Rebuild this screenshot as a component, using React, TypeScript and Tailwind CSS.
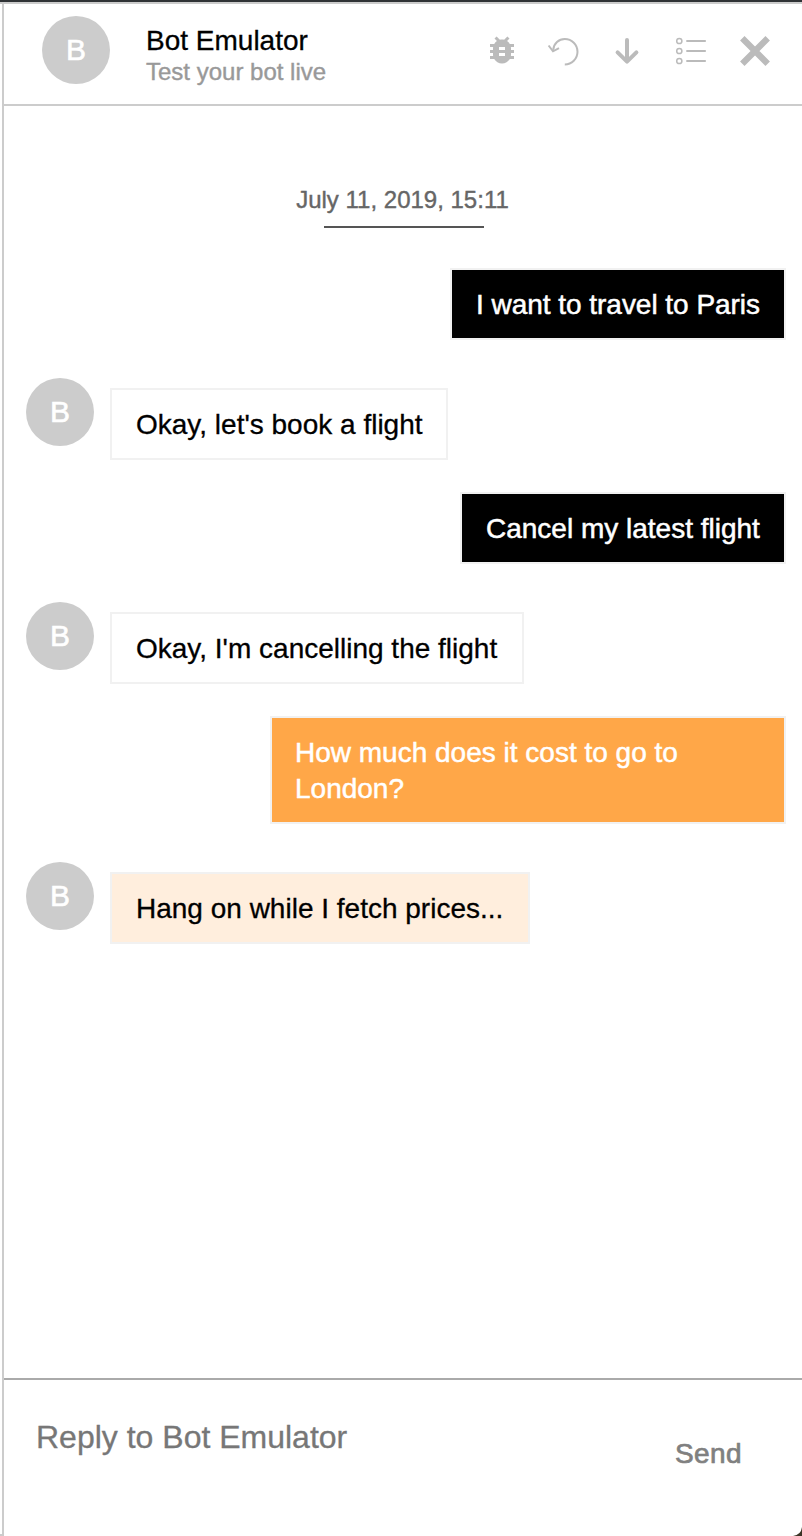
import React from "react";

type Message = { from: "user" | "bot"; text: string; box: string };

const messages: Message[] = [
  { from: "user", text: "I want to travel to Paris", box: "mt-10 w-[336px] pl-6 tracking-[-0.03px] bg-black text-white [-webkit-text-stroke:0.5px]" },
  { from: "bot", text: "Okay, let's book a flight", box: "w-[338px] pl-6 bg-white text-black [-webkit-text-stroke:0.3px]" },
  { from: "user", text: "Cancel my latest flight", box: "mt-8 w-[326px] pl-6 bg-black text-white [-webkit-text-stroke:0.5px]" },
  { from: "bot", text: "Okay, I'm cancelling the flight", box: "w-[414px] pl-6 bg-white text-black [-webkit-text-stroke:0.3px]" },
  { from: "user", text: "How much does it cost to go to London?", box: "mt-8 w-[516px] pl-[23px] bg-[#ffa748] text-white [-webkit-text-stroke:0.5px]" },
  { from: "bot", text: "Hang on while I fetch prices...", box: "w-[420px] pl-6 bg-[#ffeedd] text-black [-webkit-text-stroke:0.3px]" },
];

function Avatar() {
  return (
    <div className="flex size-[68px] shrink-0 items-center justify-center rounded-full bg-[#ccc] text-[30px] leading-9 text-white [-webkit-text-stroke:0.6px]">
      B
    </div>
  );
}

function Bubble({ message }: { message: Message }) {
  const wrap = message.text.length > 32 ? "pr-16" : "whitespace-nowrap";
  return (
    <div className={`border-2 border-[#f1f1f1] pb-[15px] pt-[17px] text-[28px] leading-9 ${message.box} ${wrap}`}>
      {message.text}
    </div>
  );
}

function Toolbar() {
  return (
    <div className="flex h-9 items-center text-[#bbb]">
      <svg className="size-9" viewBox="0 0 24 24" fill="currentColor">
        <path d="M20 8h-2.81c-.45-.78-1.07-1.45-1.82-1.96L17 4.41 15.59 3l-2.17 2.17C12.96 5.06 12.49 5 12 5c-.49 0-.96.06-1.41.17L8.41 3 7 4.41l1.62 1.63C7.88 6.55 7.26 7.22 6.81 8H4v2h2.09c-.05.33-.09.66-.09 1v1H4v2h2v1c0 .34.04.67.09 1H4v2h2.81c1.04 1.79 2.97 3 5.19 3s4.15-1.21 5.19-3H20v-2h-2.09c.05-.33.09-.66.09-1v-1h2v-2h-2v-1c0-.34-.04-.67-.09-1H20V8zm-6 8h-4v-2h4v2zm0-4h-4v-2h4v2z" />
      </svg>
      <svg className="ml-6 size-9" viewBox="0 0 36 36" fill="none" stroke="currentColor" strokeWidth="2">
        <path d="M9.2 17.8C9.8 11.5 14.8 7 20.8 7a12.2 12.2 0 0 1 0 25.4" />
        <path d="M4.6 13.5 9 19.3l6-3.2" />
      </svg>
      <svg className="ml-7 size-9" viewBox="0 0 36 36" fill="none" stroke="currentColor" strokeWidth="4" strokeLinecap="round" strokeLinejoin="round">
        <path d="M19 8v21M9.6 20.3l9.4 9.3 9.4-9.3" />
      </svg>
      <svg className="ml-7 size-9" viewBox="0 0 36 36" fill="none" stroke="currentColor">
        <g strokeWidth="1.5">
          <circle cx="7.3" cy="9" r="2.6" />
          <circle cx="7.3" cy="19" r="2.6" />
          <circle cx="7.3" cy="29" r="2.6" />
        </g>
        <path d="M14.3 9h19.5M14.3 19h19.5M14.3 29h19.5" strokeWidth="1.8" />
      </svg>
      <svg className="ml-7 size-9" viewBox="0 0 36 36" fill="none" stroke="currentColor" strokeWidth="6.3">
        <path d="m6.3 6.3 25.4 25.4M31.7 6.3 6.3 31.7" />
      </svg>
    </div>
  );
}

export default function App() {
  return (
    <div className="relative flex h-[1536px] w-[802px] flex-col overflow-hidden border-t-2 border-[#303336] bg-white font-['Liberation_Sans',sans-serif]">
      <div className="h-0.5 shrink-0 bg-[#ccc]" />
      <div className="ml-0.5 flex min-h-0 flex-1 flex-col border-l-2 border-[#ccc]">
        <header className="flex h-[102px] shrink-0 items-start border-b-2 border-[#ccc] pl-[38px] pt-3">
          <Avatar />
          <div className="ml-9 w-[338px] pt-[9px]">
            <h1 className="text-[28px] leading-8 text-black [-webkit-text-stroke:0.3px]">Bot Emulator</h1>
            <p className="text-[24px] leading-[30px] text-[#999] [-webkit-text-stroke:0.4px]">Test your bot live</p>
          </div>
          <div className="pt-4">
            <Toolbar />
          </div>
        </header>

        <main className="flex min-h-0 flex-1 flex-col pl-[22px] pr-4">
          <div className="mt-[78px] flex flex-col items-center pr-[7px]">
            <time className="text-[24px] leading-8 text-[#666] [-webkit-text-stroke:0.4px]">July 11, 2019, 15:11</time>
            <div className="ml-[3px] mt-[10px] h-0.5 w-40 bg-[#555]" />
          </div>
          {messages.map((message) =>
            message.from === "user" ? (
              <div key={message.text} className="flex justify-end">
                <Bubble message={message} />
              </div>
            ) : (
              <div key={message.text} className="mt-[38px] flex items-start">
                <Avatar />
                <div className="ml-4 pt-[10px]">
                  <Bubble message={message} />
                </div>
              </div>
            ),
          )}
        </main>

        <footer className="flex h-[158px] shrink-0 items-start justify-between border-t-2 border-[#aaa] pl-8 pr-[60px]">
          <div className="pt-[37px] text-[32px] leading-10 text-[#777] [-webkit-text-stroke:0.3px]">Reply to Bot Emulator</div>
          <div className="pt-[56px] text-[28px] leading-9 tracking-[0.4px] text-[#808080] [-webkit-text-stroke:0.7px]">Send</div>
        </footer>
      </div>
      <div className="absolute bottom-0 left-0 h-0.5 w-0.5 bg-[#ccc]" />
      <svg className="absolute bottom-0 right-0 h-[9px] w-[9px]" viewBox="0 0 9 9">
        <path d="M9 0Q8 8 0 9h9z" fill="#3b3426" />
      </svg>
    </div>
  );
}
